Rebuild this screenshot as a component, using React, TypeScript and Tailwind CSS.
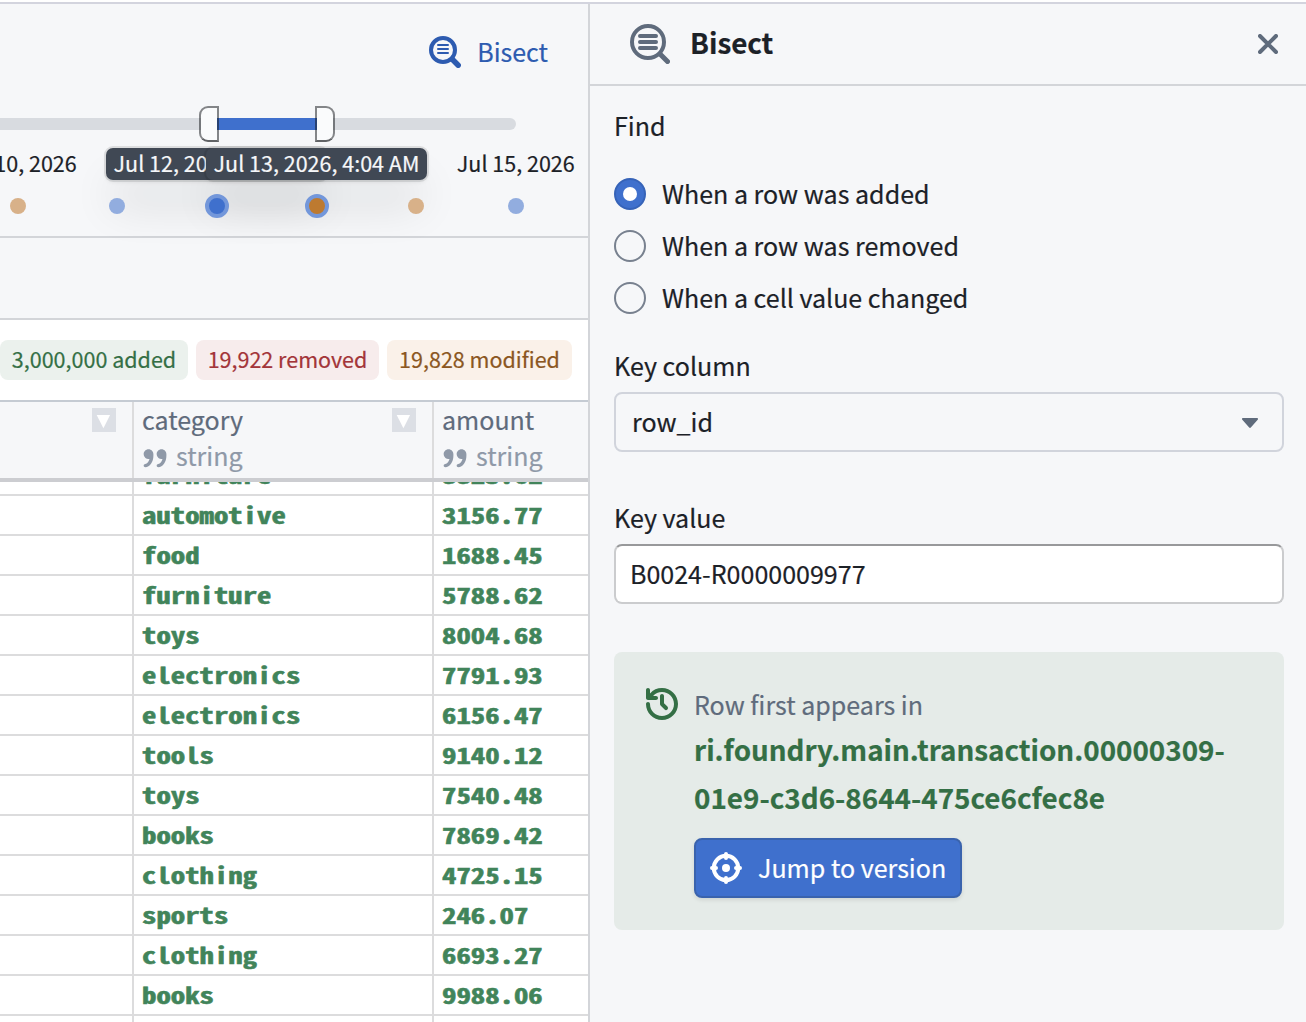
import clsx from "clsx";

const versions = [
  { color: "bg-[#d8b189]", label: "Jul 10, 2026" },
  { color: "bg-[#92addf]" },
  { color: "bg-[#3f70cd]", selected: true },
  { color: "bg-[#bd7a30]", selected: true },
  { color: "bg-[#d8b189]" },
  { color: "bg-[#92addf]", label: "Jul 15, 2026" },
];

const rows = [
  ["furniture", "8823.62"],
  ["automotive", "3156.77"],
  ["food", "1688.45"],
  ["furniture", "5788.62"],
  ["toys", "8004.68"],
  ["electronics", "7791.93"],
  ["electronics", "6156.47"],
  ["tools", "9140.12"],
  ["toys", "7540.48"],
  ["books", "7869.42"],
  ["clothing", "4725.15"],
  ["sports", "246.07"],
  ["clothing", "6693.27"],
  ["books", "9988.06"],
  ["", ""],
];

const options = [
  { label: "When a row was added", checked: true },
  { label: "When a row was removed", checked: false },
  { label: "When a cell value changed", checked: false },
];

function FilterToggle() {
  return (
    <span className="flex h-6 w-6 shrink-0 items-center justify-center bg-[#dcdfe5]">
      <svg width="24" height="24" viewBox="0 0 24 24" fill="#fff">
        <path d="M4.7 7h13.4l-6.7 13.2z" />
      </svg>
    </span>
  );
}

function CitationIcon() {
  return (
    <svg width="26" height="26" viewBox="0 0 16 16" fill="currentColor" className="mt-px">
      <path d="M15.02 5c0-1.66-1.34-3-3-3s-3 1.34-3 3a2.996 2.996 0 003.6 2.94C12.1 9.76 11.14 11 10.02 11c-.55 0-1 .45-1 1s.45 1 1 1c2.76 0 5-3.13 5-7 0-.16-.01-.31-.02-.45.01-.18.02-.37.02-.55zm-11-3c-1.66 0-3 1.34-3 3a2.996 2.996 0 003.6 2.94C4.1 9.76 3.14 11 2.02 11c-.55 0-1 .45-1 1s.45 1 1 1c2.76 0 5-3.13 5-7 0-.16-.01-.31-.02-.45.01-.18.02-.37.02-.55 0-1.66-1.34-3-3-3z" />
    </svg>
  );
}

function HistoryIcon() {
  return (
    <svg width="32" height="32" viewBox="0 0 16 16" fill="currentColor" className="mt-1 shrink-0">
      <path d="M8 3c-.55 0-1 .45-1 1v4c0 .28.11.53.29.71l2 2a1.003 1.003 0 001.42-1.42L9 7.59V4c0-.55-.45-1-1-1zm0-3a7.95 7.95 0 00-6 2.74V1c0-.55-.45-1-1-1S0 .45 0 1v4c0 .55.45 1 1 1h4c.55 0 1-.45 1-1s-.45-1-1-1H3.54C4.64 2.78 6.23 2 8 2c3.31 0 6 2.69 6 6s-2.69 6-6 6-6-2.69-6-6c0-.55-.45-1-1-1s-1 .45-1 1c0 4.42 3.58 8 8 8s8-3.58 8-8-3.58-8-8-8z" />
    </svg>
  );
}

function LocateIcon() {
  return (
    <svg width="32" height="32" viewBox="0 0 16 16" fill="none" stroke="currentColor" strokeWidth="2" strokeLinecap="round">
      <circle cx="8" cy="8" r="6.1" />
      <path d="M8 1v2M8 13v2M1 8h2M13 8h2" />
      <circle cx="8" cy="8" r="2" fill="currentColor" stroke="none" />
    </svg>
  );
}

function Tooltip({ children, className }: { children: string; className: string }) {
  return (
    <div
      className={clsx(
        "absolute top-[30px] flex h-8 w-[221px] items-center justify-center whitespace-nowrap rounded-[7px] bg-[#404854] pb-0.5 text-[21.5px] leading-[30px] text-[#f6f7f9] shadow-[0_0_0_2px_rgba(17,20,24,0.1),0_2px_4px_rgba(17,20,24,0.08),0_30px_44px_-6px_rgba(17,20,24,0.14)]",
        className
      )}
    >
      {children}
    </div>
  );
}

function Timeline() {
  return (
    <section className="h-[234px] border-b-2 border-[#d3d5d9]">
      <div className="flex h-[114px] justify-end pr-[40px] pt-[30px]">
        <button className="flex h-9 items-center gap-4 text-[25px] text-[#2d5bb0]">
          <svg width="32" height="32" viewBox="0 0 32 32" fill="none" stroke="currentColor" strokeLinecap="round">
            <circle cx="14" cy="14" r="12" strokeWidth="4" />
            <path d="M23.5 23.5l5.7 5.7" strokeWidth="5.5" />
            <path d="M9 9h10M9 13h10M9 17h10" strokeWidth="2" />
          </svg>
          <span className="pb-0.5 leading-9">Bisect</span>
        </button>
      </div>

      {/* Range slider */}
      <div className="relative h-3 w-[516px] rounded-r-full bg-[#d8dbe0]">
        <div className="ml-[217px] h-3 w-[100px] bg-[#3f70cd]" />
        <Tooltip className="left-[106px]">Jul 12, 2026, 4:04 AM</Tooltip>
        <Tooltip className="left-[206px]">Jul 13, 2026, 4:04 AM</Tooltip>
        <span className="absolute -top-3 left-[199px] h-9 w-5 rounded-l-[9px] border-2 border-[#111418]/50 border-b-[#111418]/65 bg-[#fafbfc] bg-clip-padding" />
        <span className="absolute -top-3 left-[315px] h-9 w-5 rounded-r-[9px] border-2 border-[#111418]/50 border-b-[#111418]/65 bg-[#fafbfc] bg-clip-padding" />
      </div>

      <div className="-ml-[32px] mt-[17px] flex h-8 w-[598px] text-[21.5px] leading-8 text-[#1c2127]">
        {versions.map((v, i) => (
          <span key={i} className="flex w-[99.6px] shrink-0 justify-center whitespace-nowrap">
            {v.label}
          </span>
        ))}
      </div>
      <div className="relative -ml-[32px] mt-[15px] flex h-6 w-[598px]">
        {versions.map((v, i) => (
          <span key={i} className="flex w-[99.6px] shrink-0 items-center justify-center">
            <span
              className={clsx("rounded-full", v.color, v.selected ? "h-6 w-6 border-4 border-[#7397da]" : "h-4 w-4")}
            />
          </span>
        ))}
      </div>
    </section>
  );
}

function ColumnHeader({ name }: { name: string }) {
  return (
    <div className="flex-1 pl-2">
      <div className="h-[38px] text-[25px] leading-[34px] text-[#5f6b7c]">{name}</div>
      <div className="flex h-9 items-center text-[25px] text-[#8f99a8]">
        <CitationIcon />
        <span className="ml-2 pb-1.5 leading-[30px]">string</span>
      </div>
    </div>
  );
}

function DataTable() {
  return (
    <div className="flex flex-1 flex-col overflow-hidden border-t-2 border-[#c5cbd3]">
      <div className="flex h-20 shrink-0 border-b-4 border-[#cccdd1] bg-[#f6f7f9]">
        <div className="flex w-[134px] justify-end border-r-2 border-[#dcdcdd] pr-4 pt-1.5">
          <FilterToggle />
        </div>
        <div className="flex w-[300px] border-r-2 border-[#dcdcdd] pr-4">
          <ColumnHeader name="category" />
          <div className="pt-1.5">
            <FilterToggle />
          </div>
        </div>
        <ColumnHeader name="amount" />
      </div>
      <div className="flex-1 overflow-hidden">
        <div className="-mt-[26px] font-['Noto_Sans_Mono_CJK_SC','DejaVu_Sans_Mono',monospace] text-[22px] font-bold leading-[36px] text-[#41845a] [-webkit-text-stroke:0.5px]">
          {rows.map(([category, amount], i) => (
            <div key={i} className="flex h-10 border-b-2 border-[#dcdcdd]">
              <div className="w-[134px] border-r-2 border-[#dcdcdd]" />
              <div className="w-[300px] border-r-2 border-[#dcdcdd] pl-2">
                <span className="block origin-left scale-x-[1.308]">{category}</span>
              </div>
              <div className="pl-2">
                <span className="block origin-left scale-x-[1.308]">{amount}</span>
              </div>
            </div>
          ))}
        </div>
      </div>
    </div>
  );
}

function BisectPanel() {
  return (
    <aside className="flex-1 text-[25.04px] text-[#1c2127]">
      <header className="flex h-[82px] items-center border-b-2 border-[#d3d5d9] pl-10 pr-7">
        <svg width="40" height="40" viewBox="0 0 40 40" fill="none" stroke="#5f6b7c" strokeWidth="4" strokeLinecap="round">
          <circle cx="18" cy="18" r="16" />
          <path d="M30.5 30.5l7 7" strokeWidth="5" />
          <path d="M10 12h16M10 18h16M10 24h16" />
        </svg>
        <h2 className="ml-5 flex-1 pb-1 text-[27.8px] font-bold leading-9">Bisect</h2>
        <svg width="20" height="20" viewBox="0 0 20 20" stroke="#5f6b7c" strokeWidth="4" strokeLinecap="round">
          <path d="M2 2l16 16M18 2L2 18" />
        </svg>
      </header>

      <div className="px-6 pr-[22px] pt-[21px]">
        <div className="h-9 leading-9">Find</div>
        <div className="mt-[33px] flex flex-col gap-4">
          {options.map((o) => (
            <label key={o.label} className="flex h-9 items-center gap-4">
              <span
                className={clsx(
                  "flex h-8 w-8 items-center justify-center rounded-full border-2",
                  o.checked ? "border-[#3663b8] bg-[#3f70cd]" : "border-[#78818f]"
                )}
              >
                {o.checked && <span className="h-3.5 w-3.5 rounded-full bg-white" />}
              </span>
              <span className="pb-0.5 leading-[34px]">{o.label}</span>
            </label>
          ))}
        </div>

        <div className="mt-[31px] h-9 leading-9">Key column</div>
        <div className="mt-[9px] flex h-[60px] items-center justify-between rounded-lg border-2 border-[#d1d4dc] pl-4 pr-6">
          <span>row_id</span>
          <svg width="16" height="10" viewBox="0 0 16 10" fill="#5f6b7c" className="mt-0.5">
            <path d="M1 0h14c.9 0 1.3 1 .7 1.7L8.8 9.6c-.4.5-1.2.5-1.6 0L.3 1.7C-.3 1 .1 0 1 0z" />
          </svg>
        </div>

        <div className="mt-[47px] h-9 leading-9">Key value</div>
        <div className="mt-[9px] flex h-[60px] items-center rounded-lg border-2 border-[#cbccce] border-t-[#98999b] bg-white pl-3.5">
          B0024-R0000009977
        </div>

        <div className="mt-12 flex h-[278px] gap-4 rounded-lg bg-[#e5ebe8] p-8 text-[#346f45]">
          <HistoryIcon />
          <div>
            <div className="mt-0.5 h-9 leading-9 text-[#5f6b7c]">Row first appears in</div>
            <div className="mt-[3px] text-[27.82px] font-bold leading-[48px]">
              ri.foundry.main.transaction.00000309-
              <br />
              01e9-c3d6-8644-475ce6cfec8e
            </div>
            <button className="mt-[17px] flex h-[60px] w-[268px] items-center gap-4 rounded-lg border-2 border-[#3a63ad] bg-[#3f70cd] pl-3.5 text-white shadow-[0_2px_4px_rgba(17,20,24,0.1)]">
              <LocateIcon />
              Jump to version
            </button>
          </div>
        </div>
      </div>
    </aside>
  );
}

export default function App() {
  return (
    <div className="h-[1022px] w-[1306px] overflow-hidden bg-white pt-0.5 font-['Noto_Sans_CJK_SC',sans-serif] [-webkit-text-stroke:0.2px]">
      <div className="flex h-[1020px] border-t-2 border-[#d3d4de] bg-[#f6f7f9]">
        <main className="flex w-[590px] shrink-0 flex-col overflow-hidden border-r-2 border-[#d3d5d9]">
          <Timeline />
          <div className="h-[82px] shrink-0 border-b-2 border-[#d3d5d9]" />
          <div className="flex min-h-0 flex-1 flex-col bg-white">
            <div className="flex h-20 shrink-0 items-center gap-2 whitespace-nowrap text-[21.5px] leading-[30px]">
              <span className="flex h-10 w-[188px] items-center justify-center rounded-lg bg-[#ebf1ed] pb-0.5 text-[#346f45]">
                3,000,000 added
              </span>
              <span className="flex h-10 w-[183px] items-center justify-center rounded-lg bg-[#f7ecec] pb-0.5 text-[#a33539]">
                19,922 removed
              </span>
              <span className="flex h-10 w-[185px] items-center justify-center rounded-lg bg-[#faf1e9] pb-0.5 text-[#8b5722]">
                19,828 modified
              </span>
            </div>
            <DataTable />
          </div>
        </main>
        <BisectPanel />
      </div>
    </div>
  );
}
